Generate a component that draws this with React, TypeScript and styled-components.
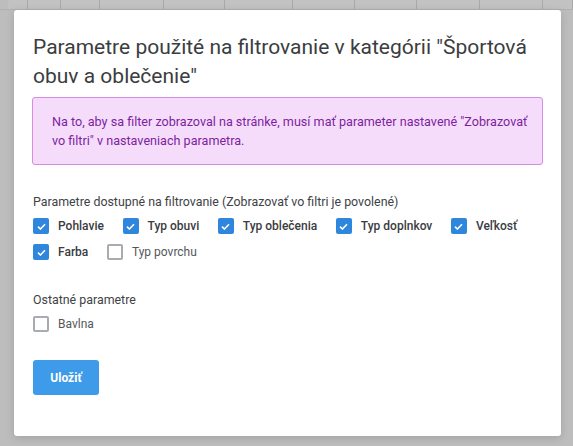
import React from 'react'
import styled, { createGlobalStyle } from 'styled-components'

const Global = createGlobalStyle`
  html, body {
    margin: 0;
    padding: 0;
    width: 573px;
    height: 446px;
    overflow: hidden;
    font-family: Roboto, "Noto Sans", "Liberation Sans", sans-serif;
  }
`

const Page = styled.div`
  position: relative;
  width: 573px;
  height: 446px;
  background: #bdbdbd;
  overflow: hidden;
`

const HeaderStrip = styled.div`
  display: flex;
  height: 9px;
  border-bottom: 1px solid #b0b0b0;
  padding-left: 8px;
`

const HeaderCell = styled.div<{ $w: number }>`
  width: ${p => p.$w}px;
  border-right: 1px solid #a9a9a9;
  background: #c2c2c2;
`

const Overlay = styled.div`
  position: absolute;
  inset: 0;
  display: flex;
  align-items: flex-start;
  justify-content: center;
  padding-top: 10px;
  padding-left: 2px;
`

const Modal = styled.div`
  width: 547px;
  height: 426px;
  box-sizing: border-box;
  background: #fff;
  border-radius: 3px;
  box-shadow: 0 2px 8px rgba(0, 0, 0, 0.15);
  padding: 23px 18px 0 18px;
`

const Title = styled.h2`
  margin: 0 0 6px 1px;
  font-size: 21px;
  line-height: 29px;
  font-weight: 400;
  color: #3b3d40;
`

const Alert = styled.div`
  margin-bottom: 29px;
  border: 1px solid #d58ce2;
  background: #f6dcfb;
  border-radius: 3px;
  padding: 14px 8px 14px 19px;
  font-size: 12.6px;
  line-height: 19px;
  color: #7d1fa0;
`

const Section = styled.div<{ $space: number }>`
  margin-bottom: ${p => p.$space}px;
  padding-left: 1px;
`

const SectionLabel = styled.div`
  font-size: 12.4px;
  line-height: 16px;
  color: #404346;
  margin-bottom: 8px;
`

const Options = styled.div`
  display: flex;
  flex-wrap: wrap;
  column-gap: 18.6px;
  row-gap: 10px;
`

const Option = styled.label<{ $on: boolean }>`
  display: flex;
  align-items: center;
  gap: 9px;
  font-size: 12px;
  line-height: 16px;
  font-weight: ${p => (p.$on ? 500 : 400)};
  color: ${p => (p.$on ? '#3a3c3f' : '#55585b')};
`

const Box = styled.span<{ $on: boolean }>`
  width: 16px;
  height: 16px;
  box-sizing: border-box;
  border-radius: 2px;
  display: flex;
  align-items: center;
  justify-content: center;
  background: ${p => (p.$on ? '#2f86dd' : '#fff')};
  border: ${p => (p.$on ? 'none' : '2px solid #a8abaf')};
`

const SaveButton = styled.button`
  margin: 0 0 0 1px;
  width: 66px;
  height: 35px;
  border: none;
  border-radius: 3px;
  background: #3d9be9;
  color: #fff;
  font-family: Roboto, "Liberation Sans", sans-serif;
  font-size: 12px;
  font-weight: 700;
`

function Check({ on }: { on: boolean }) {
  return (
    <Box $on={on}>
      {on && (
        <svg width="9" height="7" viewBox="0 0 9 7">
          <path d="M1 3.6 L3.4 6 L8 1.2" stroke="#fff" strokeWidth="1.6" fill="none" />
        </svg>
      )}
    </Box>
  )
}

const filterParams = [
  { name: 'Pohlavie', on: true },
  { name: 'Typ obuvi', on: true },
  { name: 'Typ oblečenia', on: true },
  { name: 'Typ doplnkov', on: true },
  { name: 'Veľkosť', on: true },
  { name: 'Farba', on: true },
  { name: 'Typ povrchu', on: false },
]

const otherParams = [{ name: 'Bavlna', on: false }]

export default function App() {
  return (
    <Page>
      <Global />
      <HeaderStrip>
        {[20, 33, 40, 65, 62, 70, 64, 63, 64, 65, 30].map((w, i) => (
          <HeaderCell key={i} $w={w} />
        ))}
      </HeaderStrip>
      <Overlay>
        <Modal>
          <Title>Parametre použité na filtrovanie v kategórii "Športová obuv a oblečenie"</Title>
          <Alert>
            Na to, aby sa filter zobrazoval na stránke, musí mať parameter nastavené "Zobrazovať vo filtri" v
            nastaveniach parametra.
          </Alert>
          <Section $space={32}>
            <SectionLabel>Parametre dostupné na filtrovanie (Zobrazovať vo filtri je povolené)</SectionLabel>
            <Options>
              {filterParams.map(p => (
                <Option key={p.name} $on={p.on}>
                  <Check on={p.on} />
                  {p.name}
                </Option>
              ))}
            </Options>
          </Section>
          <Section $space={28}>
            <SectionLabel>Ostatné parametre</SectionLabel>
            <Options>
              {otherParams.map(p => (
                <Option key={p.name} $on={p.on}>
                  <Check on={p.on} />
                  {p.name}
                </Option>
              ))}
            </Options>
          </Section>
          <SaveButton>Uložiť</SaveButton>
        </Modal>
      </Overlay>
    </Page>
  )
}
